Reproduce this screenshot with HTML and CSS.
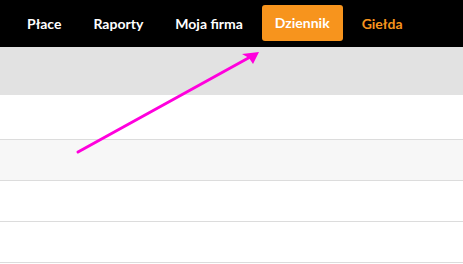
FILE: index.html
```html
<!DOCTYPE html>
<html>
<head>
<meta charset="utf-8">
<link rel="stylesheet" href="styles.css">
</head>
<body>
<nav class="nav">
  <a class="item">Płace</a>
  <a class="item">Raporty</a>
  <a class="item">Moja firma</a>
  <a class="item active">Dziennik</a>
  <a class="item gold">Giełda</a>
</nav>
<div class="thead"></div>
<div class="row first"></div>
<div class="row alt"></div>
<div class="row"></div>
<div class="row"></div>
<svg class="arrow" width="463" height="264" viewBox="0 0 463 264">
  <line x1="78" y1="152" x2="252" y2="56" stroke="#ff00dd" stroke-width="3" stroke-linecap="round"/>
  <polygon points="259,52 242,54 249,58 253,64" fill="#ff00dd"/>
</svg>
</body>
</html>
```
FILE: styles.css
```css
html, body { margin: 0; padding: 0; }
body {
  width: 463px; height: 264px; overflow: hidden; position: relative;
  font-family: Lato, "Open Sans", sans-serif; background: #fff;
}
.nav {
  height: 47px; background: #000; display: flex; align-items: center;
  padding-left: 14px; gap: 6px; box-sizing: border-box;
}
.item {
  color: #fff; font-weight: 700; font-size: 14px; line-height: 36px;
  padding: 0 13px; border-radius: 3px; display: block;
}
.item.active { background: #f7941d; height: 36px; margin-top: -1px; }
.item.gold { color: #f7941d; }
.thead { height: 48px; background: #e2e2e2; }
.row { height: 40px; border-bottom: 1px solid #dcdcdc; background: #fff; }
.row.first { height: 44px; }
.row.alt { background: #f7f7f7; }
.arrow { position: absolute; left: 0; top: 0; }
```
